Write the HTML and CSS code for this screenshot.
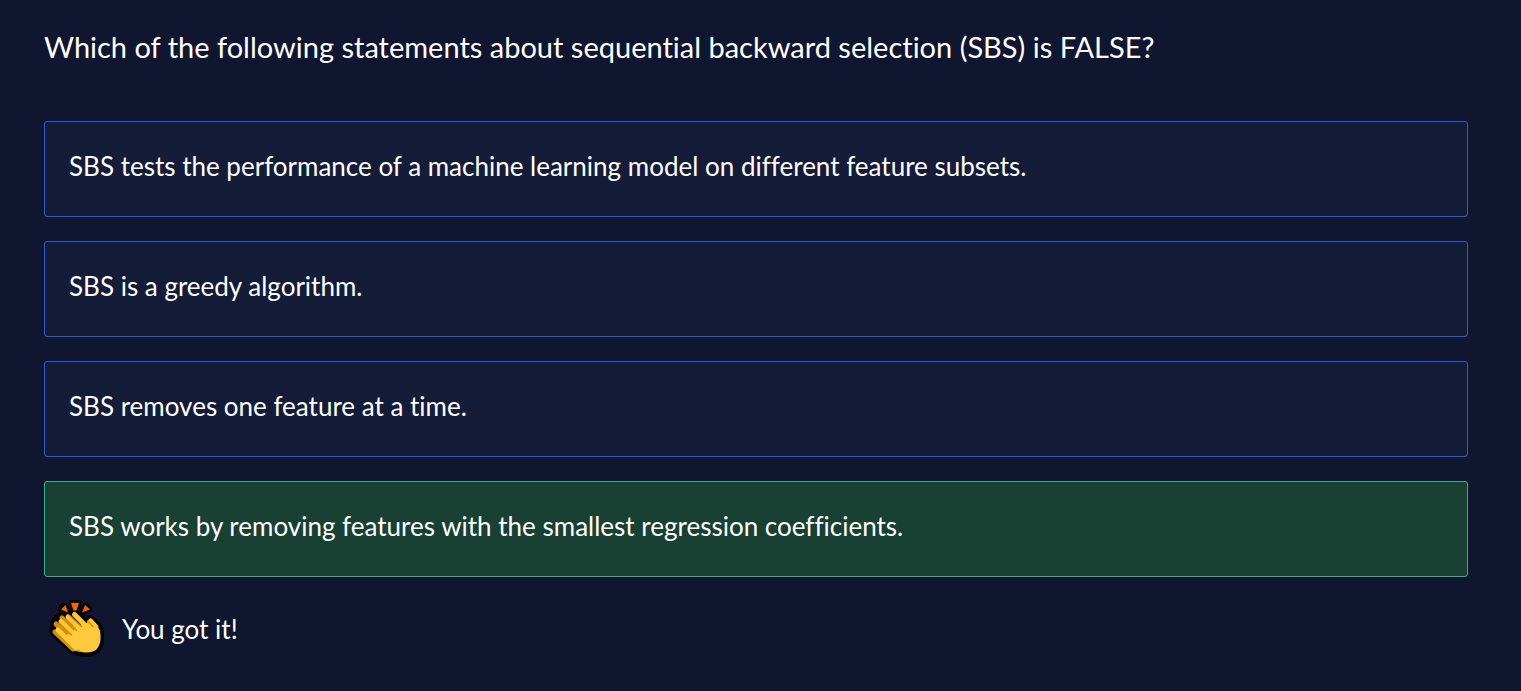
FILE: index.html
```html
<!DOCTYPE html>
<html lang="en">
<head>
<meta charset="utf-8">
<meta name="viewport" content="width=device-width, initial-scale=1">
<title>Quiz</title>
<link rel="stylesheet" href="styles.css">
</head>
<body>
<main class="quiz">
  <h1 class="question">Which of the following statements about sequential backward selection (SBS) is FALSE?</h1>
  <div class="answers">
    <button class="answer" type="button">SBS tests the performance of a machine learning model on different feature subsets.</button>
    <button class="answer" type="button">SBS is a greedy algorithm.</button>
    <button class="answer" type="button">SBS removes one feature at a time.</button>
    <button class="answer answer-correct" type="button">SBS works by removing features with the smallest regression coefficients.</button>
  </div>
  <div class="feedback" role="status">
    <svg class="clap" viewBox="0 0 64 64" aria-hidden="true">
      <g fill="#000" stroke="#000" stroke-width="6" stroke-linejoin="round">
        <path d="M17 12 20 9 24 15ZM28 6H34L32 13H30ZM42 9 45 12 37 15Z"/>
        <path d="M17 19Q19 17 23 19Q25 16 27 18Q29 13 34 17L43 26L44 22Q46 20 50 24Q57 30 57 35V44Q55 57 42 57Q32 57 26 52L9 36Q7 31 11 30Q8 26 11 23Q13 19 17 19Z"/>
        <path d="M22 12H40L36 21Z"/>
      </g>
      <g fill="#f7630c">
        <path d="M17 12.500 21.500 8 24 15.500ZM27 6H35L32.500 13.500H29.500ZM41 8 46 12.500 38 15.500Z"/>
      </g>
      <g fill="none" stroke="#d38f06" stroke-width="5" stroke-linecap="round">
        <path d="M18 21 30 33M12 27 29 44M11 35 29 52"/>
      </g>
      <path fill="#d38f06" d="M12 28 33 29 42 55Q34 56 28 52L12 37Z"/>
      <g fill="none" stroke="#ffc83d" stroke-width="5" stroke-linecap="round">
        <path d="M30.500 17.500 46 33M24 20 42 38M17 24.500 35 42.500M14 33 32 51M46.500 24 52 30"/>
      </g>
      <path fill="#ffc83d" d="M39 26 43 26 44 23 52 28Q56.500 32 56.500 38V43Q55 55.500 43 55.500Q36 55.500 31 50L20 39L27 36Z"/>
      <path fill="none" stroke="#d38f06" stroke-width="1.600" stroke-linecap="round" d="M26 19 37.500 29.500M20 22 32.500 33.500M15.500 26.500 27.500 38M43.500 24 49 29.500"/>
    </svg>
    <p class="feedback-text">You got it!</p>
  </div>
</main>
</body>
</html>
```
FILE: styles.css
```css
* { box-sizing: border-box; }
body { margin: 0; background: #10162f; color: #fff; font-family: Lato, sans-serif; font-variant-ligatures: none; }
.quiz { padding: 27px 53px 27px 44px; }
.question { margin: 0 0 54px; font-size: 29px; line-height: 40px; font-weight: 400; }
.answers { display: grid; gap: 24px; }
.answer { min-height: 96px; padding: 23px 24px 29px; border: 1px solid #2f5bd0; border-radius: 3px; background: #151c38; color: inherit; font: inherit; font-variant-ligatures: none; font-size: 26px; line-height: 40px; text-align: left; }
.answer-correct { background: #184033; border-color: #3cae87; }
.feedback { display: flex; align-items: center; gap: 14px; margin-top: 20px; }
.clap { width: 64px; height: 64px; }
.feedback-text { margin: 0; font-size: 26px; line-height: 40px; }
```
